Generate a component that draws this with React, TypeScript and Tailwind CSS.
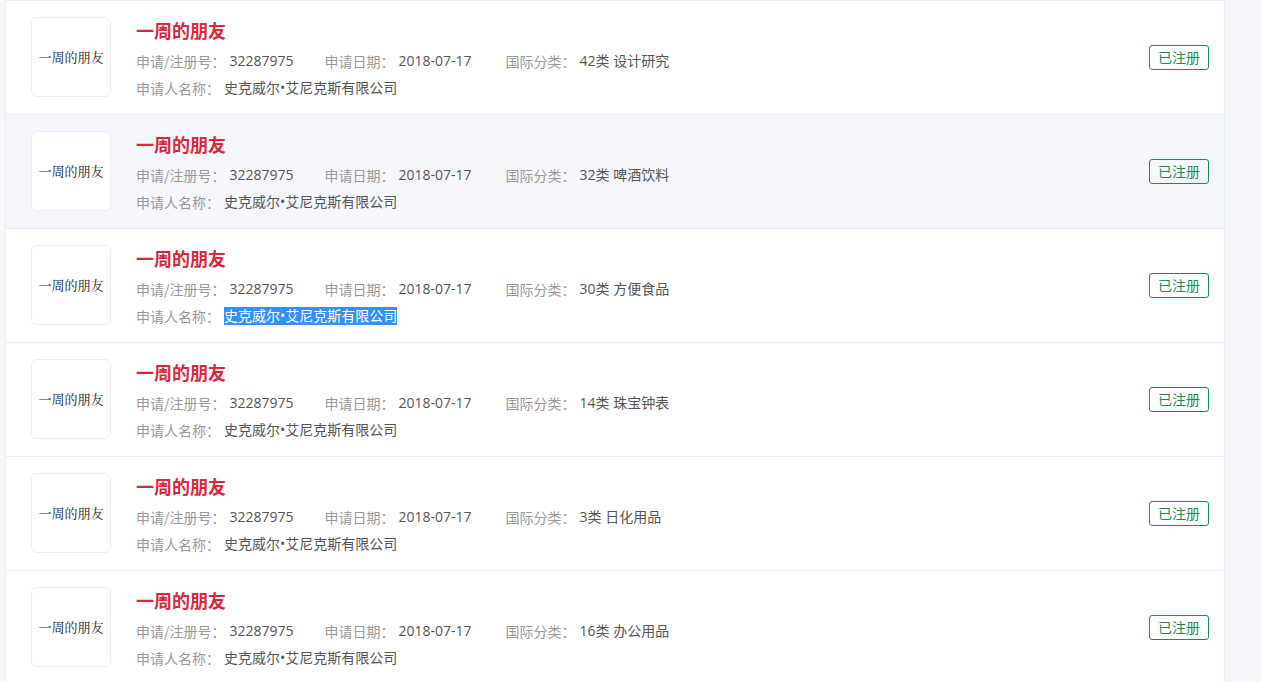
const rows = [
  { cls: "42类 设计研究" },
  { cls: "32类 啤酒饮料", active: true },
  { cls: "30类 方便食品", selected: true },
  { cls: "14类 珠宝钟表" },
  { cls: "3类 日化用品" },
  { cls: "16类 办公用品" },
]

const value = "font-['Open_Sans','Noto_Sans_CJK_SC',sans-serif] text-[#555]"

function TrademarkRow({ cls, active, selected }: { cls: string; active?: boolean; selected?: boolean }) {
  return (
    <div
      className={`flex h-[114px] shrink-0 items-start border-b border-[#ebeef3] pl-[25px] pr-[15px] pt-4 ${
        active ? "bg-[#f5f7fd]" : "bg-white"
      }`}
    >
      <div className="flex h-20 w-20 shrink-0 items-center justify-center rounded-md border border-[#eeeeee] bg-white text-[13px] text-[#222] font-['Noto_Serif_CJK_SC','Noto_Sans_CJK_SC',serif]">
        一周的朋友
      </div>
      <div className="ml-[25px] flex flex-1 flex-col">
        <div className="h-[28px] text-[18px] font-bold leading-[26px] text-[#d9283b]">一周的朋友</div>
        <div className="mt-[2px] flex h-[28px] items-center text-[14px] leading-[28px]">
          <span className="text-[#999]">申请/注册号：</span>
          <span className={`ml-1 mr-[31px] ${value}`}>32287975</span>
          <span className="text-[#999]">申请日期：</span>
          <span className={`ml-1 mr-[34px] ${value}`}>2018-07-17</span>
          <span className="text-[#999]">国际分类：</span>
          <span className={`ml-1 ${value}`}>{cls}</span>
        </div>
        <div className="-mt-px flex h-[28px] items-center text-[14px] leading-[28px]">
          <span className="text-[#999]">申请人名称：</span>
          <span
            className={`ml-1 leading-[18px] font-['Open_Sans','Noto_Sans_CJK_SC',sans-serif] ${
              selected ? "bg-[#3390ff] text-white" : "text-[#555]"
            }`}
          >
            史克威尔•艾尼克斯有限公司
          </span>
        </div>
      </div>
      <div className="flex h-20 items-center self-start">
        <span className="flex h-[25px] w-[60px] items-center justify-center rounded-[3px] border border-[#1e8a55] text-[14px] text-[#1e8a55]">
          已注册
        </span>
      </div>
    </div>
  )
}

export default function App() {
  return (
    <div className="flex h-[682px] w-full overflow-hidden bg-[#f7f8fc] pl-[5px] font-['Noto_Sans_CJK_SC','Liberation_Sans',sans-serif]">
      <div className="flex w-[1220px] flex-col border-x border-t border-[#ebeef3] bg-white">
        {rows.map((r, i) => (
          <TrademarkRow key={i} cls={r.cls} active={r.active} selected={r.selected} />
        ))}
      </div>
    </div>
  )
}
